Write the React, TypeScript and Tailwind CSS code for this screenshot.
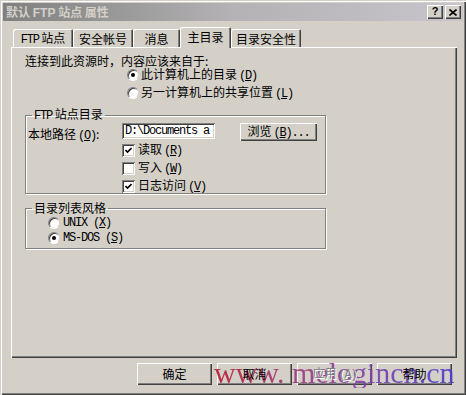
import React from "react";

const raised =
  "shadow-[inset_1px_1px_0_#ffffff,inset_-1px_-1px_0_#404040,inset_-2px_-2px_0_#808080]";
const sunken =
  "shadow-[inset_1px_1px_0_#808080,inset_-1px_-1px_0_#ffffff,inset_2px_2px_0_#404040,inset_-2px_-2px_0_#d4d0c8]";
const mono = "font-['Liberation_Mono',monospace] tracking-[-1.2px]";

function Acc({ c }: { c: string }) {
  return (
    <span className={`${mono} ml-[2px]`}>
      (<span className="underline underline-offset-1">{c}</span>)
    </span>
  );
}

function Radio({ on }: { on?: boolean }) {
  return (
    <div className="w-[12px] h-[12px] rounded-full bg-white border border-t-[#808080] border-l-[#808080] border-b-white border-r-[#d4d0c8] shadow-[inset_1px_1px_0_#404040] flex items-center justify-center shrink-0">
      {on && <div className="w-[4px] h-[4px] rounded-full bg-black" />}
    </div>
  );
}

function Check({ on }: { on?: boolean }) {
  return (
    <div className={`w-[13px] h-[13px] bg-white ${sunken} flex items-center justify-center shrink-0`}>
      {on && (
        <svg width="7" height="7" viewBox="0 0 7 7">
          <path d="M0.5 3 L2.5 5 L6.5 1" fill="none" stroke="#000" strokeWidth="1.6" />
        </svg>
      )}
    </div>
  );
}

function Tab({ label, w, sel }: { label: React.ReactNode; w: string; sel?: boolean }) {
  return (
    <div
      className={`${w} ${
        sel ? "h-[21px] mb-[-1px] relative z-10 pb-[2px]" : "h-[18px] pt-[1px]"
      } bg-[#d4d0c8] rounded-t-[2px] shadow-[inset_1px_1px_0_#ffffff,inset_-1px_0_0_#404040,inset_-2px_0_0_#808080] flex items-center justify-center leading-[14px] shrink-0`}
    >
      {label}
    </div>
  );
}

function Btn({ children, disabled }: { children: React.ReactNode; disabled?: boolean }) {
  return (
    <div
      className={`w-[75px] h-[22px] bg-[#d4d0c8] ${raised} flex items-center justify-center leading-[14px] ${
        disabled ? "text-[#808080] [text-shadow:1px_1px_0_#ffffff]" : "text-black"
      }`}
    >
      <span className="relative z-20">{children}</span>
    </div>
  );
}

export default function App() {
  return (
    <div className="relative w-[466px] h-[395px] overflow-hidden bg-[#d4d0c8] p-[3px] font-['Noto_Sans_CJK_SC',sans-serif] text-[12px] text-black shadow-[inset_1px_1px_0_#d4d0c8,inset_2px_2px_0_#ffffff,inset_-1px_-1px_0_#404040,inset_-2px_-2px_0_#808080]">
      {/* Title bar */}
      <div className="h-[18px] flex items-center justify-between bg-linear-to-r from-[#808080] via-[#b4b2b4] to-[#c8c4cc] pl-[3px] pr-[2px]">
        <span className="font-bold text-[#d4d0c8] leading-[14px]">
          默认 <span className="font-['Liberation_Sans',sans-serif]">FTP</span> 站点 属性
        </span>
        <div className="flex gap-[2px]">
          <div className={`w-[16px] h-[14px] bg-[#d4d0c8] ${raised} flex items-center justify-center`}>
            <span className="font-['Liberation_Sans',sans-serif] font-bold text-[11px] leading-[11px] mt-[-1px]">?</span>
          </div>
          <div className={`w-[16px] h-[14px] bg-[#d4d0c8] ${raised} flex items-center justify-center`}>
            <svg width="8" height="7" viewBox="0 0 8 7">
              <path d="M0.5 0.5 L7.5 6.5 M7.5 0.5 L0.5 6.5" stroke="#000" strokeWidth="1.6" />
            </svg>
          </div>
        </div>
      </div>

      {/* Tabs */}
      <div className="mt-[6px] h-[20px] flex items-end pl-[10px]">
        <Tab w="w-[60px]" label={<span><span className={mono}>FTP</span> 站点</span>} />
        <Tab w="w-[60px]" label="安全帐号" />
        <Tab w="w-[47px]" label="消息" />
        <Tab w="w-[51px]" sel label="主目录" />
        <Tab w="w-[70px]" label="目录安全性" />
      </div>

      {/* Panel */}
      <div className="ml-[8px] w-[446px] h-[311px] bg-[#d4d0c8] shadow-[inset_1px_1px_0_#ffffff,inset_-1px_-1px_0_#404040,inset_-2px_-2px_0_#808080] pl-[14px] pt-[7px] flex flex-col">
        <div className="h-[14px] leading-[14px]">连接到此资源时，内容应该来自于:</div>
        <div className="h-[14px] flex items-center pl-[102px] gap-[2px] leading-[14px]">
          <Radio on />
          <span>
            此计算机上的目录<Acc c="D" />
          </span>
        </div>
        <div className="mt-[4px] h-[14px] flex items-center pl-[102px] gap-[2px] leading-[14px]">
          <Radio />
          <span>
            另一计算机上的共享位置<Acc c="L" />
          </span>
        </div>

        <fieldset className="mt-[8px] w-[301px] h-[86px] border border-[#808080] shadow-[1px_1px_0_#ffffff,inset_1px_1px_0_#ffffff]">
          <legend className="ml-[6px] px-[2px] leading-[12px]">
            <span className={mono}>FTP</span> 站点目录
          </legend>
          <div className="mt-[1px] h-[18px] flex items-start">
            <div className="w-[96px] pl-[2px] pt-[4px] leading-[14px]">
              本地路径<Acc c="O" />:
            </div>
            <div className={`w-[93px] h-[16px] bg-white ${sunken} flex items-center pl-[3px] overflow-hidden`}>
              <span className={`${mono} text-[12px] leading-[12px] whitespace-nowrap`}>{"D:\\Documents a"}</span>
            </div>
            <div className={`ml-[25px] w-[77px] h-[18px] bg-[#d4d0c8] ${raised} flex items-center justify-center leading-[14px]`}>
              <span>
                浏览<Acc c="B" />
                <span className={mono}>...</span>
              </span>
            </div>
          </div>
          <div className="h-[18px] flex items-center pl-[96px] gap-[3px] leading-[14px]">
            <Check on />
            <span>
              读取<Acc c="R" />
            </span>
          </div>
          <div className="h-[18px] flex items-center pl-[96px] gap-[3px] leading-[14px]">
            <Check />
            <span>
              写入<Acc c="W" />
            </span>
          </div>
          <div className="h-[18px] flex items-center pl-[96px] gap-[3px] leading-[14px]">
            <Check on />
            <span>
              日志访问<Acc c="V" />
            </span>
          </div>
        </fieldset>

        <fieldset className="mt-[7px] w-[301px] h-[48px] border border-[#808080] shadow-[1px_1px_0_#ffffff,inset_1px_1px_0_#ffffff]">
          <legend className="ml-[6px] px-[2px] leading-[14px]">目录列表风格</legend>
          <div className="h-[15px] flex items-center pl-[22px] gap-[3px] leading-[14px]">
            <Radio />
            <span className={mono}>
              UNIX (<span className="underline underline-offset-1">X</span>)
            </span>
          </div>
          <div className="h-[15px] flex items-center pl-[22px] gap-[3px] leading-[14px]">
            <Radio on />
            <span className={mono}>
              MS-DOS (<span className="underline underline-offset-1">S</span>)
            </span>
          </div>
        </fieldset>
      </div>

      {/* Bottom buttons */}
      <div className="mt-[5px] flex justify-end gap-[5px] pr-[11px]">
        <Btn>确定</Btn>
        <Btn>取消</Btn>
        <Btn disabled>
          应用<Acc c="A" />
        </Btn>
        <Btn>帮助</Btn>
      </div>

      {/* Watermark overlay */}
      <div className="absolute left-[214px] top-[358px] text-[30px] leading-[30px] font-['Liberation_Serif',serif] whitespace-nowrap bg-linear-to-r from-[#b8142e] via-[#903c9c] to-[#4a3ad0] bg-clip-text text-transparent opacity-90 pointer-events-none">
        www. melogincn.cn
      </div>
    </div>
  );
}
